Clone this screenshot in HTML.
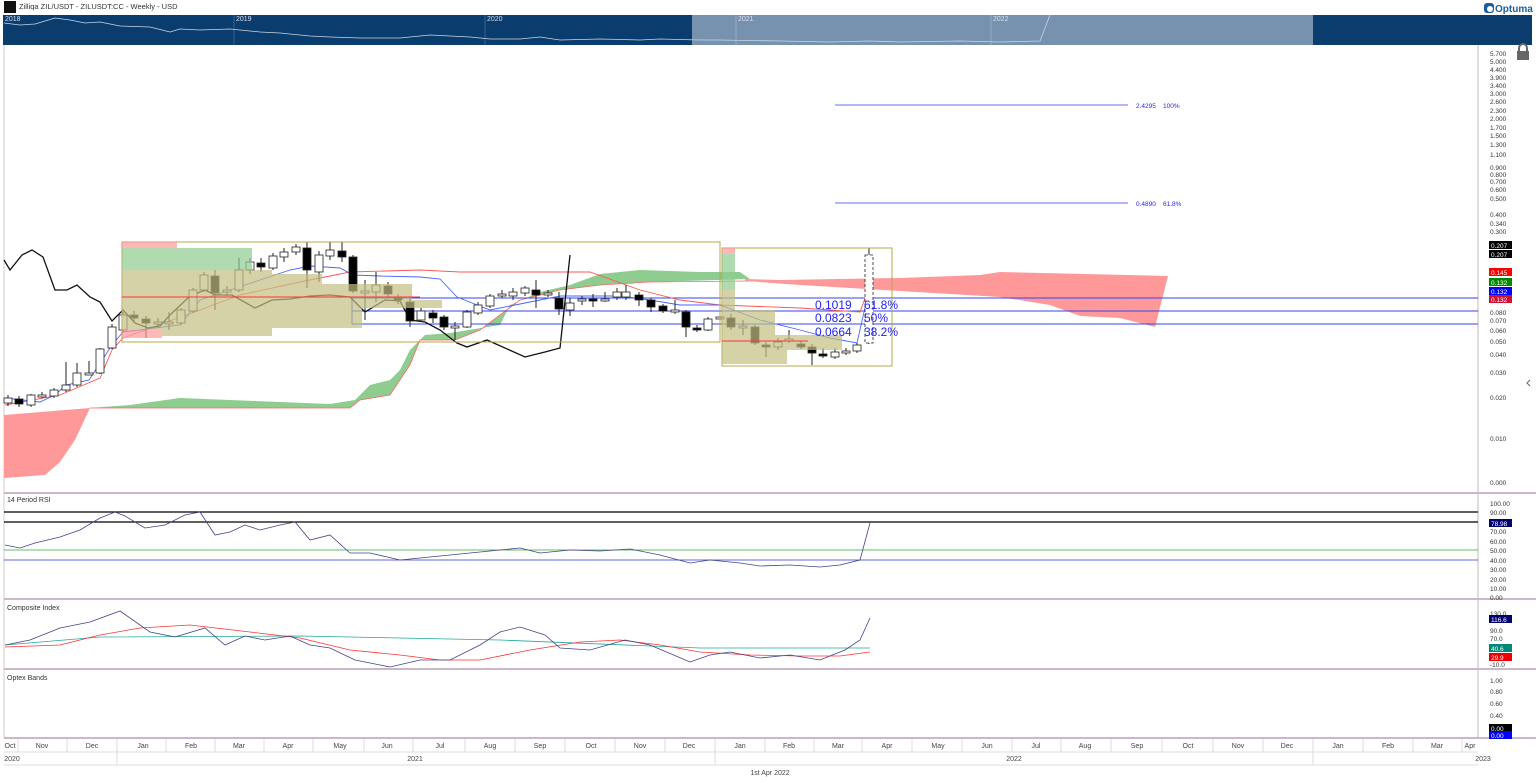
<!DOCTYPE html>
<html><head><meta charset="utf-8"><style>
body{margin:0;width:1536px;height:783px;overflow:hidden;background:#fff;font-family:"Liberation Sans",sans-serif;}
svg{position:absolute;left:0;top:0}
text{font-family:"Liberation Sans",sans-serif}
</style></head><body>
<svg id="s" width="1536" height="783" viewBox="0 0 1536 783">
<rect x="4" y="1" width="12" height="12" fill="#111"/>
<text x="19" y="9" font-size="7.5" fill="#333">Zilliqa ZIL/USDT - ZILUSDT:CC - Weekly - USD</text>
<rect x="1484" y="3" width="10" height="10" rx="3" fill="#1b5c9e"/>
<circle cx="1490" cy="9" r="3" fill="#fff"/>
<text x="1495" y="12" font-size="10" fill="#1b5c9e" font-weight="bold">Optuma</text>
<rect x="3" y="15" width="1529" height="30" fill="#0b3c6e"/>
<rect x="692" y="15" width="621" height="30" fill="#7792ae"/>
<line x1="234" y1="15" x2="234" y2="45" stroke="#5a7ea4" stroke-width="0.6"/>
<line x1="485" y1="15" x2="485" y2="45" stroke="#5a7ea4" stroke-width="0.6"/>
<line x1="736" y1="15" x2="736" y2="45" stroke="#a9bccf" stroke-width="0.6"/>
<line x1="991" y1="15" x2="991" y2="45" stroke="#a9bccf" stroke-width="0.6"/>
<g font-size="7" fill="#dde"><text x="5" y="21">2018</text><text x="236" y="21">2019</text><text x="487" y="21">2020</text><text x="738" y="21">2021</text><text x="993" y="21">2022</text></g>
<polyline fill="none" stroke="#c9d6e4" stroke-width="0.8" points="4,23 20,25 35,24 45,21 55,18 70,20 85,23 100,22 120,26 150,27 170,32 180,29 200,30 230,29 260,32 280,33 310,36 330,37 360,38 400,38 430,35 470,37 490,39 520,39 540,37 560,40 600,39 640,40 660,39 700,40 720,40 780,41 830,42 870,41 900,42 960,41 1000,42 1040,41 1050,15"/>
<line x1="4" y1="45" x2="4" y2="738" stroke="#ccc"/>
<line x1="1478" y1="45" x2="1478" y2="738" stroke="#bbb"/>
<line x1="4" y1="493" x2="1536" y2="493" stroke="#c8b8c8" stroke-width="2"/>
<line x1="4" y1="599" x2="1536" y2="599" stroke="#c8b8c8" stroke-width="2"/>
<line x1="4" y1="669" x2="1536" y2="669" stroke="#c8b8c8" stroke-width="2"/>
<line x1="4" y1="738" x2="1536" y2="738" stroke="#c8b8c8" stroke-width="2"/>
<rect x="1517" y="51" width="12" height="9" fill="#666"/><path d="M1519 51v-3a4 4 0 0 1 8 0v3" fill="none" stroke="#666" stroke-width="2"/>
<path d="M1530 380l-3 3l3 3" fill="none" stroke="#666"/>
<polygon fill="#f99" points="4,415 90,408 75,440 60,462 45,475 4,478"/>
<polygon fill="#8fcc8f" points="90,408 130,405 180,398 230,400 280,402 330,404 355,400 370,385 390,380 400,370 410,350 425,335 450,333 500,325 510,305 540,292 570,285 600,274 640,270 700,272 740,272 750,279 650,282 600,285 560,290 520,300 500,315 480,330 455,340 420,340 410,365 390,395 360,400 350,408"/>
<polyline fill="none" stroke="#f66" stroke-width="0.8" points="90,408 350,408 360,400 390,395 410,365 420,340 455,340 480,330 500,315 520,300 560,290 600,285 650,282 750,281"/>
<polygon fill="#f99" points="745,279 780,280 900,278 980,275 1000,272 1168,276 1155,327 1120,318 1080,316 1050,305 1000,297 900,291 800,285 745,281"/>
<g stroke="#3344ee" stroke-width="1">
<line x1="352" y1="298" x2="1478" y2="298"/><line x1="352" y1="311" x2="1478" y2="311"/><line x1="352" y1="324" x2="1478" y2="324"/>
<line x1="352" y1="298" x2="352" y2="324"/>
<line x1="835" y1="105" x2="1128" y2="105" stroke-width="0.8"/><line x1="835" y1="203" x2="1128" y2="203" stroke-width="0.8"/>
</g>
<g fill="#22f" font-size="6.5"><text x="1136" y="108">2.4295</text><text x="1163" y="108">100%</text><text x="1136" y="206">0.4890</text><text x="1163" y="206">61.8%</text></g>
<polyline fill="none" stroke="#f55" stroke-width="0.9" points="5,405 60,395 100,378 112,350 123,338 200,310 240,295 300,282 350,272 420,270 460,272 560,272 590,272 640,290 680,300 720,305 800,308 860,312 868,290"/>
<polyline fill="none" stroke="#46f" stroke-width="0.9" points="5,398 40,402 55,395 66,385 89,380 112,345 123,332 180,325 200,300 230,290 260,280 290,270 310,266 340,268 353,275 380,276 420,277 440,279 457,297 490,310 510,306 560,296 620,296 650,300 680,305 720,305 760,320 800,330 830,338 857,343 869,290"/>
<polyline fill="none" stroke="#111" stroke-width="1.3" points="4,260 10,270 22,255 32,250 43,257 55,290 67,290 77,285 90,297 100,302 112,321 123,310 135,323 148,328 160,326 170,315 190,296 205,290 215,295 232,295 255,308 272,300 290,299 310,296 330,295 350,297 365,312 385,300 400,301 410,320 425,322 440,330 457,343 467,347 487,340 525,357 545,352 560,348 570,255"/>
<g id="c"></g>
<!-- volume profiles over candles -->
<rect x="122" y="242" width="598" height="100" fill="none" stroke="#b0a84a"/>
<g opacity="0.7">
<rect x="122" y="242" width="55" height="6" fill="#f99"/>
<rect x="122" y="248" width="130" height="22" fill="#8fcc8f"/>
<rect x="122" y="270" width="150" height="4" fill="#c4bf84"/>
<rect x="122" y="274" width="200" height="10" fill="#c4bf84"/>
<rect x="122" y="284" width="290" height="16" fill="#c4bf84"/>
<rect x="122" y="300" width="320" height="8" fill="#c4bf84"/>
<rect x="122" y="308" width="240" height="20" fill="#c4bf84"/>
<rect x="122" y="328" width="150" height="8" fill="#c4bf84"/>
<rect x="122" y="330" width="40" height="8" fill="#f99"/>
</g>
<line x1="122" y1="297" x2="420" y2="297" stroke="#f33" stroke-width="1"/>
<rect x="722" y="248" width="170" height="118" fill="none" stroke="#b0a84a"/>
<g opacity="0.7">
<rect x="722" y="248" width="13" height="6" fill="#f99"/>
<rect x="722" y="254" width="13" height="36" fill="#8fcc8f"/>
<rect x="722" y="290" width="13" height="45" fill="#c4bf84"/>
<rect x="735" y="310" width="40" height="25" fill="#c4bf84"/>
<rect x="722" y="335" width="120" height="15" fill="#c4bf84"/>
<rect x="722" y="350" width="65" height="14" fill="#c4bf84"/>
</g>
<line x1="722" y1="341" x2="808" y2="341" stroke="#f33"/>
<g fill="#22f" font-size="12"><text x="815" y="309">0.1019</text><text x="864" y="309">61.8%</text><text x="815" y="322">0.0823</text><text x="864" y="322">50%</text><text x="815" y="336">0.0664</text><text x="864" y="336">38.2%</text></g>
<text x="7" y="502" font-size="7" fill="#333">14 Period RSI</text>
<line x1="4" y1="512" x2="1478" y2="512" stroke="#000" stroke-width="1.2"/>
<line x1="4" y1="522" x2="1478" y2="522" stroke="#000" stroke-width="1.2"/>
<line x1="4" y1="550" x2="1478" y2="550" stroke="#3a3" stroke-width="0.8"/>
<line x1="4" y1="560" x2="1478" y2="560" stroke="#33c" stroke-width="0.8"/>
<polyline fill="none" stroke="#448" stroke-width="0.8" points="5,545 20,548 35,543 60,537 80,530 100,518 115,512 125,516 145,528 165,525 185,515 200,512 215,535 230,532 245,525 260,530 280,525 295,522 310,540 330,535 350,553 370,553 400,560 430,557 470,553 500,550 520,548 540,553 570,550 600,551 630,549 660,555 690,563 710,560 740,563 760,566 790,565 820,567 840,565 860,560 870,523"/>
<text x="7" y="610" font-size="7" fill="#333">Composite Index</text>
<polyline fill="none" stroke="#2a9" stroke-width="0.8" points="5,645 100,637 300,636 500,640 700,648 870,648"/>
<polyline fill="none" stroke="#f33" stroke-width="0.8" points="5,647 60,645 100,635 140,628 190,625 250,632 300,638 350,650 400,655 440,660 480,660 530,650 580,642 620,640 660,645 700,652 750,655 800,656 840,656 870,652"/>
<polyline fill="none" stroke="#448" stroke-width="0.8" points="5,645 30,640 60,628 90,622 120,611 150,632 175,637 205,628 225,645 245,636 265,640 290,636 310,645 330,648 355,660 390,667 420,660 450,660 480,645 500,632 520,627 545,635 560,648 590,650 625,640 650,645 690,662 710,655 730,652 760,658 790,655 820,660 845,650 860,640 870,618"/>
<text x="7" y="680" font-size="7" fill="#333">Optex Bands</text>
<g font-size="6.5" fill="#333">
<text x="1490" y="56">5.700</text><text x="1490" y="64">5.000</text><text x="1490" y="72">4.400</text><text x="1490" y="80">3.900</text><text x="1490" y="88">3.400</text><text x="1490" y="96">3.000</text><text x="1490" y="104">2.600</text><text x="1490" y="113">2.300</text><text x="1490" y="121">2.000</text><text x="1490" y="130">1.700</text><text x="1490" y="138">1.500</text><text x="1490" y="147">1.300</text><text x="1490" y="157">1.100</text><text x="1490" y="170">0.900</text><text x="1490" y="177">0.800</text><text x="1490" y="184">0.700</text><text x="1490" y="192">0.600</text><text x="1490" y="201">0.500</text><text x="1490" y="217">0.400</text><text x="1490" y="226">0.340</text><text x="1490" y="234">0.300</text><text x="1490" y="315">0.080</text><text x="1490" y="323">0.070</text><text x="1490" y="333">0.060</text><text x="1490" y="344">0.050</text><text x="1490" y="357">0.040</text><text x="1490" y="375">0.030</text><text x="1490" y="400">0.020</text><text x="1490" y="441">0.010</text><text x="1490" y="485">0.000</text>
<text x="1490" y="506">100.00</text><text x="1490" y="515">90.00</text><text x="1490" y="534">70.00</text><text x="1490" y="544">60.00</text><text x="1490" y="553">50.00</text><text x="1490" y="563">40.00</text><text x="1490" y="572">30.00</text><text x="1490" y="582">20.00</text><text x="1490" y="591">10.00</text><text x="1490" y="600">0.00</text>
<text x="1490" y="616">130.0</text><text x="1490" y="633">90.0</text><text x="1490" y="641">70.0</text><text x="1490" y="667">-10.0</text>
<text x="1490" y="683">1.00</text><text x="1490" y="694">0.80</text><text x="1490" y="706">0.60</text><text x="1490" y="718">0.40</text>
</g>
<g font-size="6.5" fill="#fff">
<rect x="1489" y="241" width="23" height="8" fill="#000"/><text x="1491" y="248">0.207</text>
<rect x="1489" y="250" width="23" height="8" fill="#000"/><text x="1491" y="257">0.207</text>
<rect x="1489" y="268" width="23" height="8" fill="#f00"/><text x="1491" y="275">0.145</text>
<rect x="1489" y="278" width="23" height="8" fill="#080"/><text x="1491" y="285">0.132</text>
<rect x="1489" y="287" width="23" height="8" fill="#00f"/><text x="1491" y="294">0.132</text>
<rect x="1489" y="295" width="23" height="8" fill="#d01030"/><text x="1491" y="302">0.132</text>
<rect x="1489" y="519" width="23" height="8" fill="#000070"/><text x="1491" y="526">78.98</text>
<rect x="1489" y="615" width="23" height="8" fill="#000070"/><text x="1491" y="622">116.6</text>
<rect x="1489" y="644" width="23" height="8" fill="#087"/><text x="1491" y="651">40.6</text>
<rect x="1489" y="653" width="23" height="8" fill="#e00"/><text x="1491" y="660">29.9</text>
<rect x="1489" y="724" width="23" height="8" fill="#000"/><text x="1491" y="731">0.00</text>
<rect x="1489" y="731" width="23" height="8" fill="#00f"/><text x="1491" y="738">0.00</text>
</g>
<line x1="4" y1="752" x2="1478" y2="752" stroke="#ddd"/>
<line x1="4" y1="765" x2="1478" y2="765" stroke="#ddd"/>
<g stroke="#ddd">
<line x1="18" y1="739" x2="18" y2="752"/><line x1="67" y1="739" x2="67" y2="752"/><line x1="117" y1="739" x2="117" y2="765"/><line x1="166" y1="739" x2="166" y2="752"/><line x1="215" y1="739" x2="215" y2="752"/><line x1="264" y1="739" x2="264" y2="752"/><line x1="313" y1="739" x2="313" y2="752"/><line x1="364" y1="739" x2="364" y2="752"/><line x1="413" y1="739" x2="413" y2="752"/><line x1="465" y1="739" x2="465" y2="752"/><line x1="515" y1="739" x2="515" y2="752"/><line x1="565" y1="739" x2="565" y2="752"/><line x1="615" y1="739" x2="615" y2="752"/><line x1="665" y1="739" x2="665" y2="752"/><line x1="715" y1="739" x2="715" y2="765"/><line x1="765" y1="739" x2="765" y2="752"/><line x1="814" y1="739" x2="814" y2="752"/><line x1="862" y1="739" x2="862" y2="752"/><line x1="912" y1="739" x2="912" y2="752"/><line x1="962" y1="739" x2="962" y2="752"/><line x1="1012" y1="739" x2="1012" y2="752"/><line x1="1061" y1="739" x2="1061" y2="752"/><line x1="1111" y1="739" x2="1111" y2="752"/><line x1="1162" y1="739" x2="1162" y2="752"/><line x1="1213" y1="739" x2="1213" y2="752"/><line x1="1263" y1="739" x2="1263" y2="752"/><line x1="1313" y1="739" x2="1313" y2="765"/><line x1="1363" y1="739" x2="1363" y2="752"/><line x1="1413" y1="739" x2="1413" y2="752"/><line x1="1462" y1="739" x2="1462" y2="752"/>
</g>
<g font-size="7" fill="#444" text-anchor="middle">
<text x="10" y="748">Oct</text><text x="42" y="748">Nov</text><text x="92" y="748">Dec</text><text x="143" y="748">Jan</text><text x="191" y="748">Feb</text><text x="239" y="748">Mar</text><text x="288" y="748">Apr</text><text x="340" y="748">May</text><text x="387" y="748">Jun</text><text x="440" y="748">Jul</text><text x="490" y="748">Aug</text><text x="540" y="748">Sep</text><text x="591" y="748">Oct</text><text x="640" y="748">Nov</text><text x="689" y="748">Dec</text><text x="740" y="748">Jan</text><text x="789" y="748">Feb</text><text x="838" y="748">Mar</text><text x="887" y="748">Apr</text><text x="938" y="748">May</text><text x="987" y="748">Jun</text><text x="1036" y="748">Jul</text><text x="1085" y="748">Aug</text><text x="1137" y="748">Sep</text><text x="1188" y="748">Oct</text><text x="1238" y="748">Nov</text><text x="1287" y="748">Dec</text><text x="1338" y="748">Jan</text><text x="1388" y="748">Feb</text><text x="1437" y="748">Mar</text><text x="1470" y="748">Apr</text>
<text x="12" y="761">2020</text><text x="415" y="761">2021</text><text x="1014" y="761">2022</text><text x="1483" y="761">2023</text>
<text x="770" y="775">1st Apr 2022</text>
</g>
</svg>
<script>
var d=[[8,398,403,395,406,0],[19,399,404,396,407,1],[31,395,405,394,407,0],[42,395,396,392,398,0],[54,390,396,388,398,0],[66,385,390,362,392,0],[77,373,385,363,387,0],[89,373,374,361,375,0],[100,349,373,348,374,0],[112,327,348,324,349,0],[123,315,330,312,333,0],[134,315,318,311,322,1],[146,319,323,316,338,1],[158,322,324,318,326,0],[169,322,323,312,330,0],[181,310,323,308,325,0],[193,290,311,288,313,0],[204,275,290,272,292,0],[215,276,293,270,310,1],[227,290,292,286,296,0],[239,270,290,258,292,0],[250,262,270,258,274,0],[261,263,267,258,272,1],[273,256,268,253,270,0],[284,252,257,248,262,0],[296,247,252,244,255,0],[307,248,270,242,288,1],[319,255,272,251,282,0],[330,250,256,242,260,0],[342,251,257,242,262,1],[353,257,291,255,293,1],[365,291,293,280,320,0],[376,285,292,272,302,0],[388,286,294,282,298,1],[398,298,300,294,304,1],[410,302,321,298,327,1],[421,311,320,308,322,0],[433,313,318,310,323,1],[444,317,327,315,330,1],[455,326,328,322,340,0],[467,312,327,310,328,0],[478,305,313,302,315,0],[490,296,306,294,308,0],[502,294,296,290,298,0],[513,292,296,288,300,0],[525,288,293,286,296,0],[536,290,295,280,308,1],[548,293,295,290,297,0],[559,298,309,292,315,1],[570,303,310,298,316,0],[582,299,301,296,305,0],[593,299,301,294,307,1],[605,299,301,292,302,0],[617,292,297,288,300,0],[626,292,297,285,300,0],[639,295,300,292,306,1],[651,300,307,298,312,1],[663,306,311,304,313,1],[675,310,312,300,314,0],[686,312,327,310,337,1],[697,328,330,325,332,1],[708,319,330,317,331,0],[720,317,319,316,320,0],[731,318,327,314,330,1],[743,326,328,320,335,0],[755,327,343,325,345,1],[766,345,347,342,357,1],[778,342,347,338,350,0],[789,339,341,330,343,0],[801,344,347,341,349,1],[812,347,353,344,365,1],[823,354,356,348,358,1],[835,352,357,348,359,0],[846,351,353,348,355,0],[857,345,351,343,353,0],[869,255,343,248,344,0]];
var h='';d.forEach(function(c){var x=c[0],t=Math.min(c[1],c[2]),b=Math.max(c[1],c[2]);var f=c[5]?'#000':'#fff';if(b-t<2)b=t+2;
h+='<line x1="'+x+'" y1="'+c[3]+'" x2="'+x+'" y2="'+c[4]+'" stroke="#222" stroke-width="1"/>';
h+='<rect x="'+(x-4)+'" y="'+t+'" width="8" height="'+(b-t)+'" fill="'+f+'" stroke="#222" stroke-width="0.8"'+(x==869?' stroke-dasharray="3,2"':'')+'/>';});
document.getElementById('c').innerHTML=h;
</script>
</body></html>
